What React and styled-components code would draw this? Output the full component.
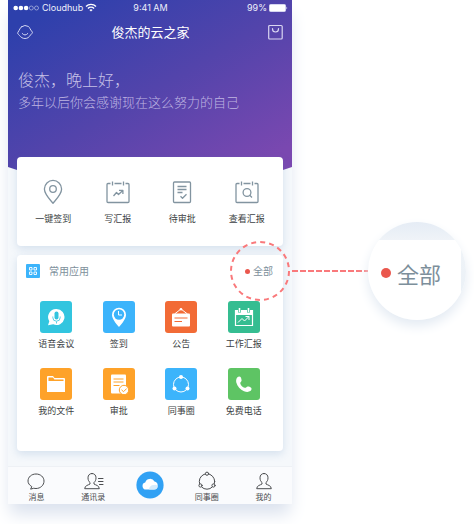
import React from 'react';
import styled, { createGlobalStyle } from 'styled-components';

const Global = createGlobalStyle`
  *, *::before, *::after { box-sizing: border-box; }
  body {
    margin: 0;
    background: #fff;
    color: #3c3f44;
    font-family: "Noto Sans CJK SC", "Noto Sans", sans-serif;
  }
  button {
    margin: 0;
    padding: 0;
    border: 0;
    background: none;
    color: inherit;
    font: inherit;
    cursor: pointer;
  }
  a { color: inherit; text-decoration: none; }
  h1, h2, p { margin: 0; font-weight: 400; }
  svg { display: block; flex: none; }
`;

const Page = styled.main`
  display: flex;
  align-items: flex-start;
  padding: 0 8px 20px;
`;

const Phone = styled.section`
  flex: 1 1 0;
  min-width: 0;
  background: #f5f8fb;
  box-shadow: 0 12px 16px -2px #dbe2ee;
`;

const Hero = styled.header`
  height: 214px;
  color: #fff;
  background: linear-gradient(150deg, #2d40ac 8%, #5344ab 46%, #7a48b0 82%);
  clip-path: polygon(0 0, 100% 0, 100% 78%, 50% 100%, 0 78%);
`;

const StatusBar = styled.div`
  display: grid;
  grid-template-columns: 1fr auto 1fr;
  align-items: center;
  height: 15px;
  padding: 0 4px 0 5px;
  font: 400 9px/15px Inter, sans-serif;
  color: #eef0fb;
`;

const StatusGroup = styled.div`
  display: flex;
  align-items: center;
  justify-content: ${(p) => (p.$end ? 'flex-end' : 'flex-start')};
  gap: 2px;
`;

const NavBar = styled.nav`
  display: flex;
  align-items: center;
  justify-content: space-between;
  height: 34px;
  padding: 0 9px;
`;

const NavTitle = styled.h1`
  font-size: 13px;
  line-height: 18px;
`;

const Greeting = styled.p`
  margin-top: 18px;
  padding-left: 10px;
  font-size: 16px;
  line-height: 24px;
  font-weight: 300;
  color: #c5c0e7;
`;

const Motto = styled.p`
  padding-left: 10px;
  font-size: 13px;
  line-height: 22px;
  font-weight: 300;
  color: #bfb5e2;
`;

const Card = styled.section`
  position: relative;
  margin: ${(p) => (p.$overlap ? '-57px' : '9px')} 9px 0;
  border-radius: 4px;
  background: #fff;
  box-shadow: 0 3px 8px rgba(80, 130, 185, 0.2);
`;

const QuickGrid = styled.div`
  display: grid;
  grid-template-columns: repeat(4, 1fr);
  padding: 20px 4px;
`;

const IconButton = styled.button`
  display: flex;
  flex-direction: column;
  align-items: center;
  font-size: 9px;
  line-height: 13px;
  white-space: nowrap;
`;

const QuickButton = styled(IconButton)`
  gap: 5px;
  height: 49px;
  svg { height: 30px; }
`;

const CardHead = styled.header`
  display: flex;
  align-items: center;
  height: 32px;
  padding: 0 10px 0 9px;
  font-size: 10px;
  color: #7d8f9b;
`;

const HeadTitle = styled.h2`
  flex: 1;
  margin-left: 9px;
  font-size: 10px;
  line-height: 16px;
`;

const AllButton = styled.button`
  position: relative;
  display: flex;
  align-items: center;
  gap: ${(p) => (p.$large ? 6 : 3)}px;
  font-size: ${(p) => (p.$large ? 22 : 10)}px;
  line-height: ${(p) => (p.$large ? 32 : 16)}px;
  color: #7d8f9b;
`;

const Dot = styled.span`
  width: ${(p) => p.$size}px;
  height: ${(p) => p.$size}px;
  border-radius: 50%;
  background: #ea574d;
`;

const Ring = styled.svg`
  position: absolute;
  top: 50%;
  right: -18px;
  transform: translateY(-50%);
  pointer-events: none;
`;

const AppGrid = styled.div`
  display: grid;
  grid-template-columns: repeat(4, 1fr);
  row-gap: 18px;
  padding: 14px 8px 34px;
`;

const AppButton = styled(IconButton)`
  gap: 4px;
`;

const AppTile = styled.span`
  display: grid;
  place-items: center;
  width: 32px;
  height: 32px;
  border-radius: 3px;
  background: ${(p) => p.$color};
`;

const TabBar = styled.nav`
  display: grid;
  grid-template-columns: repeat(5, 1fr);
  height: 38px;
  margin-top: 15px;
  border-top: 1px solid #eef1f5;
  background: #fafbfd;
`;

const Tab = styled.a`
  display: flex;
  flex-direction: column;
  align-items: center;
  padding-top: 4px;
  font-size: 8px;
  line-height: 12px;
  color: #4b4d50;
`;

const Callout = styled.aside`
  display: flex;
  align-items: center;
  flex: 0 0 174px;
  margin-top: 222px;
`;

const Leader = styled.svg`
  flex: 1;
  width: 0;
  height: 2px;
`;

const Lens = styled.div`
  display: flex;
  width: 98px;
  height: 98px;
  padding: 18px 5px 0 0;
  border-radius: 50%;
  overflow: hidden;
  background: linear-gradient(#e5ecf5, #f0f4f8 20%, #e8eff6);
  box-shadow: 0 6px 12px #e4ebf3;
`;

const LensCard = styled.div`
  display: flex;
  align-items: center;
  flex: 1;
  padding: 0 0 14px 13px;
  background: #fff;
`;

const line = { fill: 'none', stroke: '#8294a0', strokeWidth: 1.3, strokeLinejoin: 'round' };
const dark = { fill: 'none', stroke: '#4b4d50', strokeWidth: 1, strokeLinejoin: 'round', strokeLinecap: 'round' };

const PinIcon = () => (
  <svg width="24" height="30" viewBox="0 0 24 30" {...line}>
    <path d="M12 26.3C8.2 21.8 3.4 17 3.4 12a8.6 8.6 0 0 1 17.2 0c0 5-4.800 9.800-8.600 14.300Z" />
    <circle cx="12" cy="12" r="3.300" />
  </svg>
);

const CalendarFrame = ({ children }) => (
  <svg width="26" height="30" viewBox="0 0 26 30" {...line}>
    <path d="M5.500 6.500H3q-1 0-1 1V24.500q0 1 1 1h20q1 0 1-1V7.500q0-1-1-1h-2.500M9.500 6.500h7M7.500 4.500v4M18.500 4.500v4" />
    {children}
  </svg>
);

const WriteIcon = () => (
  <CalendarFrame>
    <path d="m8.500 19 3-3.500 2 2 4.300-4M14 13.400h3.900V17" />
  </CalendarFrame>
);

const SearchReportIcon = () => (
  <CalendarFrame>
    <circle cx="13" cy="15.500" r="3.900" />
    <path d="m15.500 18 2.500 2.500" />
  </CalendarFrame>
);

const ApproveIcon = () => (
  <svg width="20" height="30" viewBox="0 0 20 30" {...line}>
    <rect x="1.500" y="5" width="17" height="20.500" rx="1" />
    <path d="M5.500 9.500h9M5.500 12.500h9M5.500 15.500h5M8.500 19.300l2 1.900 4-3.900" />
  </svg>
);

const MicIcon = () => (
  <svg width="20" height="20" viewBox="0 0 20 20">
    <path fill="#fff" d="M10.500 2a8 8 0 1 1-3.300 15.300L2 18.200l1.300-4A8 8 0 0 1 10.500 2Z" />
    <rect x="8.500" y="4.500" width="4" height="8" rx="2" fill="#32c5df" />
    <path d="M6.800 9.500v1a3.700 3.700 0 0 0 7.400 0v-1M10.500 14.500v2" fill="none" stroke="#32c5df" strokeWidth=".8" />
  </svg>
);

const ClockPinIcon = () => (
  <svg width="20" height="22" viewBox="0 0 20 22">
    <path fill="#fff" d="M10 21C6.500 16.800 3 12.800 3 8.700a7 7 0 0 1 14 0C17 12.800 13.500 16.800 10 21Z" />
    <circle cx="10" cy="8.500" r="5.200" fill="#3cb4fb" />
    <path d="M9.500 5v4h3.500" fill="none" stroke="#fff" />
  </svg>
);

const NoticeIcon = () => (
  <svg width="20" height="22" viewBox="0 0 20 22">
    <path d="M3.500 8 10 3l6.500 5" fill="none" stroke="#fff" />
    <circle cx="10" cy="3.300" r="1.300" fill="#fff" />
    <rect x="1" y="7.500" width="18" height="13" rx="1" fill="#fff" />
    <path d="M3.500 12h13M3.500 15.500h7.500" stroke="#f26b36" />
  </svg>
);

const ReportIcon = () => (
  <svg width="20" height="22" viewBox="0 0 20 22" fill="none" stroke="#fff">
    <path d="M1.500 4.500h17v15h-17z" strokeWidth="1.200" />
    <path d="M1.500 4.500h17v4h-17z" fill="#fff" />
    <path d="M5.500 2v4.500M14.500 2v4.500" stroke="#35bd91" strokeWidth="3" />
    <path d="M5.500 2v4M14.500 2v4" strokeWidth="1.600" />
    <path d="m4 16.500 4-4 2.500 2.500 4.500-4.500M11.500 10.500H15V14" />
  </svg>
);

const FolderIcon = () => (
  <svg width="20" height="20" viewBox="0 0 20 20" fill="#fff">
    <path d="M1 18V3q0-1 1-1h5l1.500 2H18q1 0 1 1v13Z" />
    <path d="M2.500 3.500h4.500l1.400 2h9.100v1.500H2.500Z" fill="#fea229" />
  </svg>
);

const ApprovalIcon = () => (
  <svg width="22" height="22" viewBox="0 0 22 22">
    <rect x="3" y="1.500" width="15" height="19" rx="1" fill="#fff" />
    <path d="M5.500 6h10M5.500 9h10M5.500 12.500h6" stroke="#fea229" />
    <circle cx="16" cy="17" r="4.700" fill="#fff" stroke="#fea229" />
    <path d="m13.500 16.800 2 1.900 3.200-3.200" fill="none" stroke="#fea229" />
  </svg>
);

const CircleIcon = () => (
  <svg width="20" height="20" viewBox="0 0 20 20" fill="#fff">
    <circle cx="10" cy="10.500" r="7.500" fill="none" stroke="#fff" />
    <circle cx="10" cy="3" r="2" />
    <circle cx="3.500" cy="14.500" r="2" />
    <circle cx="16.500" cy="14.500" r="2" />
  </svg>
);

const PhoneIcon = () => (
  <svg width="20" height="20" viewBox="0 0 20 20">
    <path fill="#fff" d="M3.200 3.600c1-1 2.500-1.500 3.400-.5.600 1 1 2.400 1 3.500 0 1.100-1.600 1.600-1.300 2.900.5 2 2.400 3.800 4.400 4.300 1.300.3 1.900-1.300 3-1.300 1.300 0 2.500.5 3.400 1.200 1 1 .2 2.600-.8 3.400-1.500 1-3.800 1.100-6.300.1C6.300 15.600 3.300 12.400 2.300 8.500c-.4-1.800-.1-3.800.9-4.900Z" />
  </svg>
);

const ChatTab = () => (
  <svg width="20" height="20" viewBox="0 0 20 20" {...dark}>
    <path d="M4.800 17.800 5.800 15.600C3.500 14.200 2 12.300 2 10.100 2 6 5.500 3 10 3s8 3 8 7.100-3.500 7.400-8 7.400c-.8 0-1.200-.1-1.900-.2Z" />
  </svg>
);

const person = 'M10 2.500c-2.500 0-4 1.700-4 4.300 0 2.200.8 3.800 2 4.700V13c-1.500 1-5.300 1.500-5.300 4.700h14.600c0-3.200-3.800-3.700-5.300-4.700v-1.500c1.200-.9 2-2.500 2-4.700 0-2.600-1.500-4.300-4-4.300Z';

const ContactsTab = () => (
  <svg width="22" height="20" viewBox="0 0 22 20" {...dark}>
    <path d={person} />
    <path d="M16.500 7.500H21M16.500 10.500H21M17.500 13.500H21" />
  </svg>
);

const MeTab = () => (
  <svg width="20" height="20" viewBox="0 0 20 20" {...dark}><path d={person} /></svg>
);

const CircleTab = () => (
  <svg width="20" height="20" viewBox="0 0 20 20" {...dark}>
    <circle cx="10" cy="10.500" r="7.700" />
    <g fill="#fafbfd">
      <circle cx="10" cy="2.700" r="1.600" />
      <circle cx="3.500" cy="14.500" r="1.600" />
      <circle cx="16.500" cy="14.500" r="1.600" />
    </g>
  </svg>
);

const CloudTab = () => (
  <svg width="28" height="28" viewBox="0 0 28 28">
    <circle cx="14" cy="14" r="13.600" fill="#31a1f4" />
    <path fill="#fff" d="M10 18.500a3.500 3.500 0 0 1-.8-6.900 5 5 0 0 1 9.300-1 4 4 0 0 1-.5 7.900Z" />
    <path fill="#d4ebfc" d="M13 18.500a4.500 4.500 0 0 1 5-4.500 3.300 3.300 0 0 1 3.500 1c.5 2-1 3.500-3 3.500Z" />
  </svg>
);

const quickActions = [
  ['一键签到', PinIcon],
  ['写汇报', WriteIcon],
  ['待审批', ApproveIcon],
  ['查看汇报', SearchReportIcon],
];

const apps = [
  ['语音会议', '#32c5df', MicIcon],
  ['签到', '#3cb4fb', ClockPinIcon],
  ['公告', '#f26b36', NoticeIcon],
  ['工作汇报', '#35bd91', ReportIcon],
  ['我的文件', '#fea229', FolderIcon],
  ['审批', '#fea229', ApprovalIcon],
  ['同事圈', '#3cb4fb', CircleIcon],
  ['免费电话', '#5ec464', PhoneIcon],
];

const tabs = [
  ['消息', ChatTab],
  ['通讯录', ContactsTab],
  ['', CloudTab],
  ['同事圈', CircleTab],
  ['我的', MeTab],
];

export default function App() {
  return (
    <>
      <Global />
      <Page>
        <Phone>
          <Hero>
            <StatusBar>
              <StatusGroup>
                <svg width="27" height="6" viewBox="0 0 27 6" fill="#fff">
                  <circle cx="2.700" cy="3" r="2.300" />
                  <circle cx="7.900" cy="3" r="2.300" />
                  <circle cx="13.100" cy="3" r="2.300" />
                  <g fill="none" stroke="#bac0e5" strokeWidth=".7">
                    <circle cx="18.300" cy="3" r="2" />
                    <circle cx="23.500" cy="3" r="2" />
                  </g>
                </svg>
                <span>Cloudhub</span>
                <svg width="12" height="9" viewBox="0 0 12 9" fill="none" stroke="#fff" strokeWidth="1.400">
                  <path d="M1 3.400a7.200 7.200 0 0 1 10 0M2.900 5.400a4.500 4.500 0 0 1 6.200 0" />
                  <path d="m6 8.500-1.600-1.600a2.300 2.300 0 0 1 3.200 0Z" fill="#fff" stroke="none" />
                </svg>
              </StatusGroup>
              <span>9:41 AM</span>
              <StatusGroup $end>
                <span>99%</span>
                <svg width="19" height="8" viewBox="0 0 19 8">
                  <rect x=".5" y=".5" width="16" height="7" rx="1" fill="#fff" stroke="#d5d5ef" />
                  <path d="M17.500 2.500q1.500 1.500 0 3Z" fill="#fff" />
                </svg>
              </StatusGroup>
            </StatusBar>
            <NavBar>
              <button aria-label="个人中心">
                <svg width="16" height="16" viewBox="0 0 16 16" fill="none" stroke="#d3d6f2" strokeLinecap="round" strokeLinejoin="round">
                  <path d="M4.500 2.800Q8 .2 11.500 2.500c1.200 1 1.500 2.800 3.800 5.500.6 1-.8 1.700-1.800 3C12 13.300 10.500 14.500 8 14.500S4 13.300 2.500 11.500c-.8-1.200-2.300-1.700-1.700-3C2.800 5.500 3 4 4.500 2.800Z" />
                  <path d="M5.200 9.500q2.800 3.200 5.600 0" />
                </svg>
              </button>
              <NavTitle>俊杰的云之家</NavTitle>
              <button aria-label="商城">
                <svg width="15" height="16" viewBox="0 0 15 16" fill="none" stroke="#d9d5f1" strokeLinecap="round">
                  <rect x=".7" y="1.500" width="13.500" height="13.500" rx="1" strokeWidth="1.200" />
                  <path d="M4.500 5q0 3 3 3t3-3M4.500 5v-.500M10.500 5v-.500" strokeWidth="1.200" />
                </svg>
              </button>
            </NavBar>
            <Greeting>俊杰，晚上好，</Greeting>
            <Motto>多年以后你会感谢现在这么努力的自己</Motto>
          </Hero>

          <Card $overlap>
            <QuickGrid>
              {quickActions.map(([label, Icon]) => (
                <QuickButton key={label}>
                  <Icon />
                  {label}
                </QuickButton>
              ))}
            </QuickGrid>
          </Card>

          <Card>
            <CardHead>
              <svg width="14" height="14" viewBox="0 0 14 14">
                <rect width="14" height="14" rx="1" fill="#3cb4fb" />
                <path d="M3.500 3.500H6V6H3.500ZM8 3.500h2.500V6H8ZM3.500 8H6v2.500H3.500ZM8 8h2.500v2.500H8Z" fill="none" stroke="#fff" strokeWidth=".9" />
              </svg>
              <HeadTitle>常用应用</HeadTitle>
              <AllButton>
                <Dot $size={5} />
                全部
                <Ring width="62" height="62" viewBox="0 0 62 62">
                  <circle cx="31" cy="31" r="29" fill="none" stroke="#f9797b" strokeWidth="2" strokeDasharray="5 4.110" />
                </Ring>
              </AllButton>
            </CardHead>
            <AppGrid>
              {apps.map(([label, color, Icon]) => (
                <AppButton key={label}>
                  <AppTile $color={color}>
                    <Icon />
                  </AppTile>
                  {label}
                </AppButton>
              ))}
            </AppGrid>
          </Card>

          <TabBar>
            {tabs.map(([label, Icon]) => (
              <Tab key={label} href="#" aria-label={label || '云之家'}>
                <Icon />
                {label}
              </Tab>
            ))}
          </TabBar>
        </Phone>

        <Callout>
          <Leader>
            <path d="M0 1h600" stroke="#f9797b" strokeWidth="2" strokeDasharray="6 2" />
          </Leader>
          <Lens>
            <LensCard>
              <AllButton $large>
                <Dot $size={10} />
                全部
              </AllButton>
            </LensCard>
          </Lens>
        </Callout>
      </Page>
    </>
  );
}
